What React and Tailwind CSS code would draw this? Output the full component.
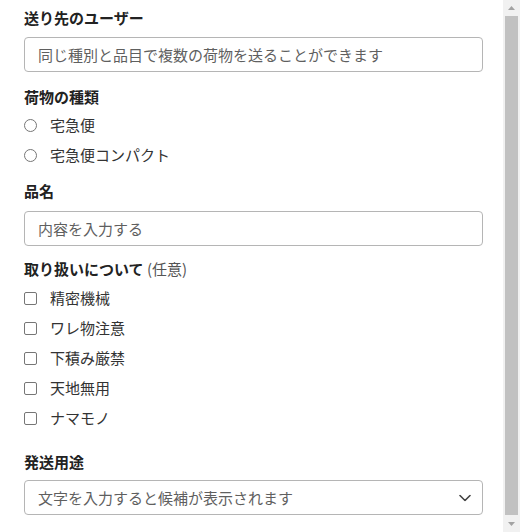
import React, { useState } from 'react';

const font = { fontFamily: '"Noto Sans CJK JP", "Noto Sans", sans-serif' };

const Label = ({ children, className = '' }) => (
  <div className={`text-[15px] leading-[22px] font-bold text-[#222] ${className}`}>{children}</div>
);

const TextBox = ({ placeholder, className = '' }) => (
  <input
    type="text"
    placeholder={placeholder}
    className={`block w-full h-[35px] rounded-[4px] border border-[#b5b5b5] bg-white px-[13px] text-[15px] text-[#222] placeholder:text-[#5f5f5f] outline-none ${className}`}
  />
);

const handling = ['精密機械', 'ワレ物注意', '下積み厳禁', '天地無用', 'ナマモノ'];

// the page's scrollbar, as it shows in the picture
const ScrollBar = () => (
  <div className="flex w-[17px] shrink-0 flex-col bg-[#f1f1f1]">
    <div className="flex h-4 items-center justify-center">
      <svg width="7" height="4" viewBox="0 0 7 4"><path d="M3.5 0L7 4H0z" fill="#a3a3a3" /></svg>
    </div>
    <div className="mx-[2px] flex-1 bg-[#c1c1c1]" />
    <div className="flex h-[17px] items-center justify-center">
      <svg width="7" height="4" viewBox="0 0 7 4"><path d="M0 0h7L3.5 4z" fill="#a3a3a3" /></svg>
    </div>
  </div>
);

export default function App() {
  const [kind, setKind] = useState('');

  return (
    <div className="flex h-[532px] overflow-hidden bg-white" style={font}>
      <div className="min-w-0 flex-1 pl-6 pr-5 pt-[7px]">
        {/* ── 送り先 ── */}
        <Label>送り先のユーザー</Label>
        <TextBox className="mt-2" placeholder="同じ種別と品目で複数の荷物を送ることができます" />

        {/* ── 荷物の種類 ── */}
        <Label className="mt-[14px]">荷物の種類</Label>
        <div className="mt-[2px]">
          {['宅急便', '宅急便コンパクト'].map((k) => (
            <label key={k} className="flex h-[30px] items-center gap-[13px] text-[15px] text-[#333]">
              <input
                type="radio"
                name="kind"
                checked={kind === k}
                onChange={() => setKind(k)}
                className="m-0 h-[13px] w-[13px] shrink-0 appearance-none rounded-full border border-[#767676] bg-white checked:border-[4px] checked:border-[#1a73e8]"
              />
              {k}
            </label>
          ))}
        </div>

        {/* ── 品名 ── */}
        <Label className="mt-[10px]">品名</Label>
        <TextBox className="mt-[9px]" placeholder="内容を入力する" />

        {/* ── 取り扱い ── */}
        <Label className="mt-[12px]">
          取り扱いについて <span className="font-normal text-[#555]">(任意)</span>
        </Label>
        <div className="mt-[3px]">
          {handling.map((h) => (
            <label key={h} className="flex h-[30px] items-center gap-[13px] text-[15px] text-[#333]">
              <input
                type="checkbox"
                className="m-0 h-[13px] w-[13px] shrink-0 appearance-none rounded-[2px] border border-[#767676] bg-white checked:bg-[#1a73e8]"
              />
              {h}
            </label>
          ))}
        </div>

        {/* ── 発送用途 ── */}
        <Label className="mt-[18px]">発送用途</Label>
        <div className="relative mt-[7px]">
          <TextBox className="pr-10" placeholder="文字を入力すると候補が表示されます" />
          <svg
            className="pointer-events-none absolute right-[12px] top-1/2 -translate-y-1/2"
            width="12"
            height="7"
            viewBox="0 0 12 7"
            fill="none"
          >
            <path d="M1 1l5 5 5-5" stroke="#444" strokeWidth="1.6" strokeLinecap="round" strokeLinejoin="round" />
          </svg>
        </div>
      </div>
      <ScrollBar />
    </div>
  );
}
